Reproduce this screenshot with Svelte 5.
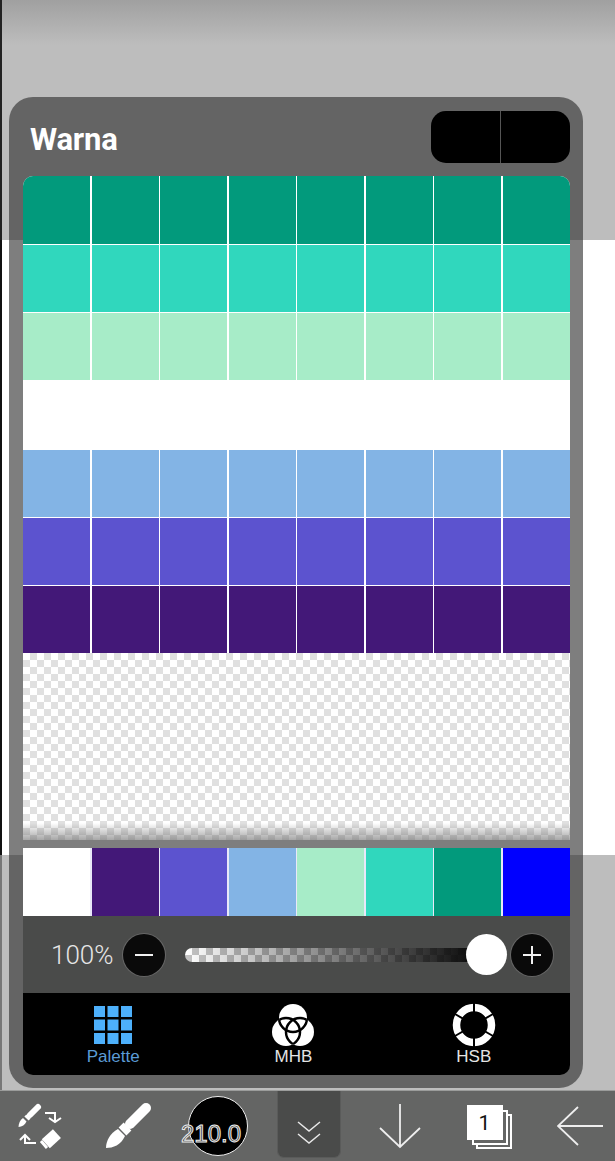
<script>
  const rows = ["#029a7c", "#30d7bd", "#a7ecc8", "#ffffff", "#83b4e5", "#5c53cf", "#431878"];
  const recent = ["#ffffff", "#431878", "#5c53cf", "#83b4e5", "#a7ecc8", "#30d7bd", "#029a7c", "#0000ff"];
  const columns = [0, 1, 2, 3, 4, 5, 6, 7];
</script>

<main class="page">
  <div class="backdrop">
    <div class="back-top"></div>
    <div class="back-white"></div>
    <div class="back-bottom"></div>
  </div>

  <section class="panel">
    <header class="head">
      <h1>Warna</h1>
      <div class="head-btns"><span></span><span></span></div>
    </header>

    <div class="swatches">
      {#each rows as color}
        {#each columns as c}
          <button class="cell" style="background: {color}" aria-label="warna {c}"></button>
        {/each}
      {/each}
    </div>
    <div class="checker"></div>

    <div class="recent">
      {#each recent as color}
        <span style="background: {color}"></span>
      {/each}
    </div>

    <div class="opacity">
      <span class="pct">100%</span>
      <button class="round" aria-label="kurang">
        <svg viewBox="0 0 42 42" width="42" height="42"><path d="M12 21h18" /></svg>
      </button>
      <div class="track"><div class="thumb"></div></div>
      <button class="round" aria-label="tambah">
        <svg viewBox="0 0 42 42" width="42" height="42"><path d="M12 21h18M21 12v18" /></svg>
      </button>
    </div>

    <nav class="tabs">
      <button class="tab active">
        <svg viewBox="0 0 40 40" width="40" height="40">
          {#each [0, 1, 2] as y}
            {#each [0, 1, 2] as x}
              <rect x={1 + x * 13.5} y={1 + y * 13.5} width="11" height="11" fill="#4db0fb" />
            {/each}
          {/each}
        </svg>
        <span>Palette</span>
      </button>
      <button class="tab">
        <svg viewBox="0 0 44 44" width="44" height="44">
          <defs>
            <clipPath id="not-top"><circle cx="15" cy="29" r="14" /><circle cx="29" cy="29" r="14" /></clipPath>
            <clipPath id="not-left"><circle cx="22" cy="15" r="14" /><circle cx="29" cy="29" r="14" /></clipPath>
            <clipPath id="not-right"><circle cx="22" cy="15" r="14" /><circle cx="15" cy="29" r="14" /></clipPath>
          </defs>
          <g fill="#fff">
            <circle cx="22" cy="15" r="14" />
            <circle cx="15" cy="29" r="14" />
            <circle cx="29" cy="29" r="14" />
          </g>
          <g fill="none" stroke="#000" stroke-width="2.500">
            <circle cx="22" cy="15" r="14" clip-path="url(#not-top)" />
            <circle cx="15" cy="29" r="14" clip-path="url(#not-left)" />
            <circle cx="29" cy="29" r="14" clip-path="url(#not-right)" />
          </g>
        </svg>
        <span>MHB</span>
      </button>
      <button class="tab">
        <svg viewBox="0 0 44 44" width="44" height="44">
          <circle cx="22" cy="22" r="17.500" fill="none" stroke="#fff" stroke-width="7.500" />
          <path d="M22 0v44M3 11l38 22M3 33l38-22" stroke="#000" stroke-width="2" />
        </svg>
        <span>HSB</span>
      </button>
    </nav>
  </section>

  <footer class="toolbar">
    <div class="slot s-swap">
      <svg viewBox="0 0 52 52" width="52" height="52" fill="none" stroke="#fff">
        <path d="M24 7l-8 8" stroke-width="6" stroke-linecap="round" />
        <path d="M14.500 16.500l-2 2" stroke-width="6" />
        <path d="M9 18l3.500 3.500C11 25 8 26.500 4.500 27C4.500 23.500 6 20 9 18Z" fill="#fff" stroke="none" />
        <path d="M31 13H41V21M35 18l6 4 6-4" stroke-width="2" />
        <path d="M22 43H11V36M6 40l5-5 5 5" stroke-width="2" />
        <rect x="30" y="33" width="15" height="12" transform="rotate(-42 37 39)" fill="#fff" stroke="none" />
        <path d="M27 41l6 7" stroke-width="3" />
      </svg>
    </div>
    <div class="slot s-brush">
      <svg viewBox="0 0 56 50" width="56" height="50" fill="none" stroke="#fff">
        <path d="M47 7L31 23" stroke-width="10" stroke-linecap="round" />
        <path d="M28.500 25.500l-5 5" stroke-width="11" />
        <path d="M19 28l7 7C22 44 14 47 7 47C7 40 11 32 19 28Z" fill="#fff" stroke="none" />
      </svg>
    </div>
    <div class="slot s-size">
      <div class="dot"></div>
      <span class="size">210.0</span>
    </div>
    <button class="fold" aria-label="tutup">
      <svg viewBox="0 0 24 24" width="24" height="24" fill="none" stroke="#e8e8e8" stroke-width="1.500">
        <path d="M1 1l11 9 11-9M1 13l11 9 11-9" />
      </svg>
    </button>
    <div class="slot s-down">
      <svg viewBox="0 0 42 46" width="42" height="46" fill="none" stroke="#eee" stroke-width="1.800">
        <path d="M21 1v43M1 25l20 19 20-19" />
      </svg>
    </div>
    <div class="slot s-layers">
      <div class="layers"><span>1</span></div>
    </div>
    <div class="slot s-back">
      <svg viewBox="0 0 46 40" width="46" height="40" fill="none" stroke="#eee" stroke-width="1.800">
        <path d="M46 20H1M21 1L1 20l20 19" />
      </svg>
    </div>
  </footer>
</main>

<style>
  :global(body) {
    margin: 0;
    background: #646564;
  }

  .page {
    position: relative;
    width: 615px;
    height: 1161px;
    overflow: hidden;
    font-family: Roboto, "Liberation Sans", sans-serif;
  }

  button {
    border: none;
    padding: 0;
    background: none;
    color: inherit;
    font: inherit;
  }

  .backdrop {
    height: 1090px;
    display: flex;
    flex-direction: column;
  }

  .back-top {
    height: 240px;
    background: linear-gradient(#a0a0a0, #bdbdbd 45px);
    border-left: 2px solid #222;
  }

  .back-white {
    height: 615px;
    background: #fff;
    border-left: 2px solid #111;
  }

  .back-bottom {
    height: 235px;
    background: #bdbdbd;
    border-left: 2px solid #777;
  }

  /* floats above the backdrop */
  .panel {
    position: absolute;
    left: 9px;
    top: 97px;
    width: 574px;
    height: 991px;
    box-sizing: border-box;
    padding: 0 13px 13px 14px;
    display: flex;
    flex-direction: column;
    border-radius: 24px;
    background: rgba(44, 44, 44, 0.61);
  }

  .head {
    height: 79px;
    flex: none;
    display: flex;
    align-items: center;
    justify-content: space-between;
  }

  h1 {
    margin: 5px 0 0 7px;
    color: #fff;
    font-size: 31px;
    font-weight: 700;
    letter-spacing: -0.2px;
  }

  .head-btns {
    width: 139px;
    height: 52px;
    display: flex;
    gap: 1px;
    border-radius: 15px;
    overflow: hidden;
    background: #555;
  }

  .head-btns span {
    flex: 1;
    background: #000;
  }

  .swatches {
    flex: none;
    display: grid;
    grid-template-columns: repeat(8, 1fr);
    grid-template-rows: 68px repeat(6, 67px);
    gap: 1.200px 1.500px;
    border-radius: 10px 10px 0 0;
    overflow: hidden;
    background: #fff;
  }

  .cell {
    display: block;
  }

  .checker {
    height: 187px;
    flex: none;
    background:
      linear-gradient(transparent 170px, rgba(110, 110, 110, 0.6)),
      repeating-conic-gradient(#e0e0e0 0 25%, #fff 0 50%) 0 0 / 14px 14px;
  }

  .recent {
    flex: none;
    margin-top: 8px;
    height: 68px;
    display: grid;
    grid-template-columns: repeat(8, 1fr);
    column-gap: 1.500px;
    background: #e8e8f8;
  }

  .opacity {
    height: 77px;
    flex: none;
    display: flex;
    align-items: center;
    background: #4a4b4a;
  }

  .pct {
    width: 100px;
    box-sizing: border-box;
    padding-left: 28px;
    color: #e6e6e6;
    font-size: 26px;
    font-weight: 300;
    white-space: nowrap;
  }

  .round {
    width: 42px;
    height: 42px;
    flex: none;
    border-radius: 50%;
    background: #0a0a0a;
    box-shadow: 0 0 0 1px #666;
  }

  .round svg {
    display: block;
    fill: none;
    stroke: #f0f0f0;
    stroke-width: 2;
  }

  .track {
    position: relative;
    width: 322px;
    height: 14px;
    margin: 0 4px 0 20px;
    border-radius: 7px;
    background:
      linear-gradient(90deg, transparent, #0a0a0a 90%),
      repeating-conic-gradient(#c4c4c4 0 25%, #fff 0 50%) 0 0 / 14px 14px;
  }

  .thumb {
    position: absolute;
    right: 0;
    top: -14px;
    width: 41px;
    height: 41px;
    border-radius: 50%;
    background: #fff;
  }

  .tabs {
    flex: 1;
    box-sizing: border-box;
    padding-right: 6px;
    display: grid;
    grid-template-columns: repeat(3, 1fr);
    border-radius: 0 0 10px 10px;
    background: #000;
  }

  .tab {
    display: flex;
    flex-direction: column;
    align-items: center;
    padding-top: 10px;
    color: #e4e4e4;
    font-family: "Liberation Sans", sans-serif;
    font-size: 17px;
  }

  .tab svg {
    display: block;
    height: 44px;
  }

  .tab.active {
    color: #5b9bd5;
  }

  .toolbar {
    height: 71px;
    box-sizing: border-box;
    display: flex;
    align-items: center;
    background: #646564;
    border-top: 2px solid #9b9c9b;
    margin-top: -1px;
  }

  .slot {
    height: 100%;
    flex: none;
    display: flex;
    align-items: center;
    justify-content: center;
  }

  .slot svg {
    display: block;
  }

  .s-swap {
    width: 80px;
  }

  .s-brush {
    width: 94px;
  }

  .s-size {
    position: relative;
    width: 87px;
  }

  .dot {
    width: 58px;
    height: 58px;
    border: 1.500px solid #eee;
    border-radius: 50%;
    background: #000;
  }

  .size {
    position: absolute;
    left: 7px;
    top: 29px;
    color: #3a3a3a;
    font-family: "Liberation Sans", sans-serif;
    font-size: 24px;
    -webkit-text-stroke: 1px #eee;
  }

  .fold {
    width: 64px;
    height: 67px;
    flex: none;
    align-self: flex-start;
    margin-left: 16px;
    display: flex;
    align-items: flex-end;
    justify-content: center;
    padding-bottom: 12px;
    box-sizing: border-box;
    background: #4a4b4a;
    border: 1px solid #5a5b5a;
    border-top: none;
    border-radius: 0 0 7px 7px;
  }

  .s-down {
    width: 118px;
  }

  .s-layers {
    width: 64px;
  }

  .layers {
    width: 36px;
    height: 35px;
    margin: 0 13px 6px 0;
    display: flex;
    align-items: center;
    justify-content: center;
    background: #fff;
    color: #111;
    font-size: 21px;
    box-shadow:
      5px 5px 0 -2px #646564,
      5px 5px 0 0 #fff,
      9px 9px 0 -2px #646564,
      9px 9px 0 0 #fff;
  }

  .s-back {
    flex: 1;
    justify-content: flex-end;
    padding-right: 12px;
  }
</style>
